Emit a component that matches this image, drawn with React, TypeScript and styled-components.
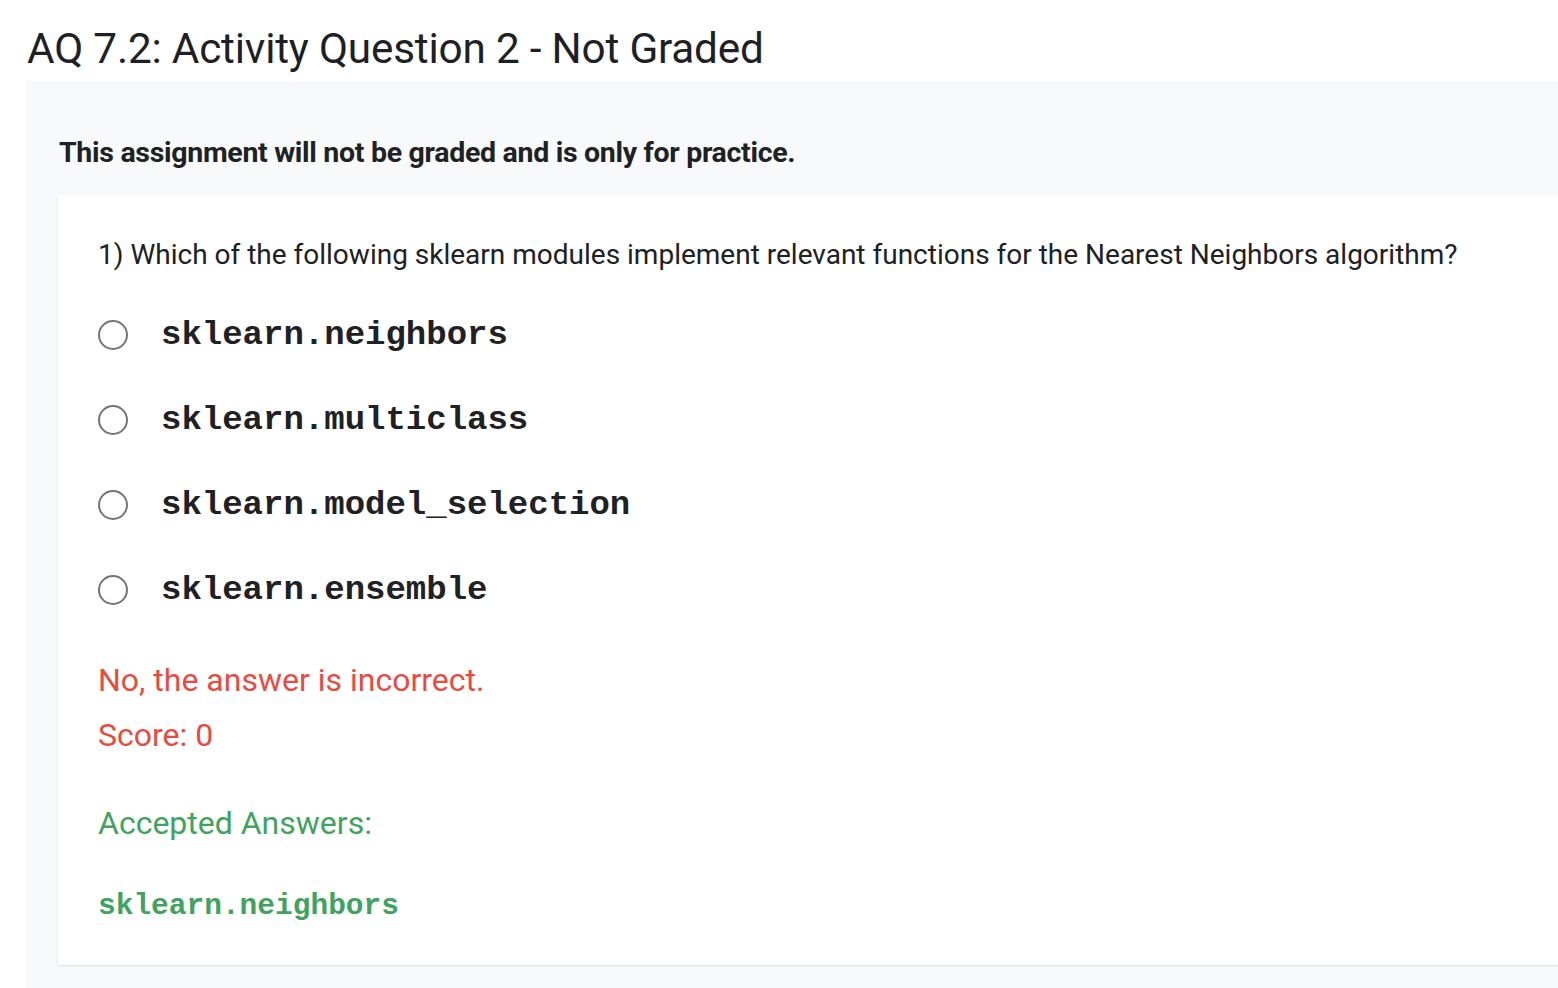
import React from "react";
import styled, { createGlobalStyle } from "styled-components";

const Global = createGlobalStyle`
  html, body { margin: 0; padding: 0; background: #ffffff; }
  body { font-family: Roboto, "Noto Sans", Arial, sans-serif; color: #202124; overflow: hidden; }
`;

const Page = styled.div`
  display: flex;
  flex-direction: column;
  padding-left: 26px;
  height: 988px;
`;

const Title = styled.h1`
  margin: 0;
  padding: 24px 0 0 1px;
  height: 81px;
  box-sizing: border-box;
  font-size: 42.3px;
  font-weight: 400;
  line-height: 50px;
  color: #1f1f26;
  letter-spacing: -0.2px;
`;

const Panel = styled.section`
  flex: 1;
  background: #f8f9fa;
  display: flex;
  flex-direction: column;
`;

const Notice = styled.p`
  margin: 0;
  height: 114px;
  box-sizing: border-box;
  padding: 54px 0 0 33px;
  font-size: 28.5px;
  line-height: 36px;
  font-weight: 700;
  color: #202124;
  letter-spacing: -0.3px;
`;

const Card = styled.div`
  margin-left: 32px;
  background: #ffffff;
  box-shadow: 0 1px 2px rgba(0, 0, 0, 0.12);
  padding: 40px 0 0 40px;
  display: flex;
  flex-direction: column;
  height: 770px;
  box-sizing: border-box;
`;

const Question = styled.div`
  font-size: 28px;
  line-height: 40px;
  color: #202124;
  margin-bottom: 17px;
`;

const Options = styled.div`
  display: flex;
  flex-direction: column;
`;

const Option = styled.label`
  display: flex;
  align-items: center;
  height: 85px;
  gap: 33px;
`;

const Radio = styled.span`
  width: 30px;
  height: 30px;
  box-sizing: border-box;
  border: 2px solid #757575;
  border-radius: 50%;
  flex-shrink: 0;
`;

const Code = styled.span<{ $color?: string; $size?: number }>`
  font-family: "Liberation Mono", "Courier New", monospace;
  font-weight: 700;
  font-size: ${(p) => p.$size ?? 34}px;
  color: ${(p) => p.$color ?? "#202124"};
`;

const Feedback = styled.div<{ $color: string; $top: number }>`
  font-size: 32px;
  line-height: 40px;
  color: ${(p) => p.$color};
  margin-top: ${(p) => p.$top}px;
`;

const Accepted = styled.div`
  margin-top: 43px;
  line-height: 40px;
`;

const options = [
  "sklearn.neighbors",
  "sklearn.multiclass",
  "sklearn.model_selection",
  "sklearn.ensemble",
];

export default function App() {
  return (
    <>
      <Global />
      <Page>
        <Title>AQ 7.2: Activity Question 2 - Not Graded</Title>
        <Panel>
          <Notice>This assignment will not be graded and is only for practice.</Notice>
          <Card>
            <Question>
              1) Which of the following sklearn modules implement relevant functions for the Nearest Neighbors algorithm?
            </Question>
            <Options>
              {options.map((o) => (
                <Option key={o}>
                  <Radio />
                  <Code>{o}</Code>
                </Option>
              ))}
            </Options>
            <Feedback $color="#ea4a40" $top={28}>No, the answer is incorrect.</Feedback>
            <Feedback $color="#ea4a40" $top={15}>Score: 0</Feedback>
            <Feedback $color="#3fa35f" $top={48}>Accepted Answers:</Feedback>
            <Accepted>
              <Code $color="#3fa35f" $size={29.5}>sklearn.neighbors</Code>
            </Accepted>
          </Card>
        </Panel>
      </Page>
    </>
  );
}
